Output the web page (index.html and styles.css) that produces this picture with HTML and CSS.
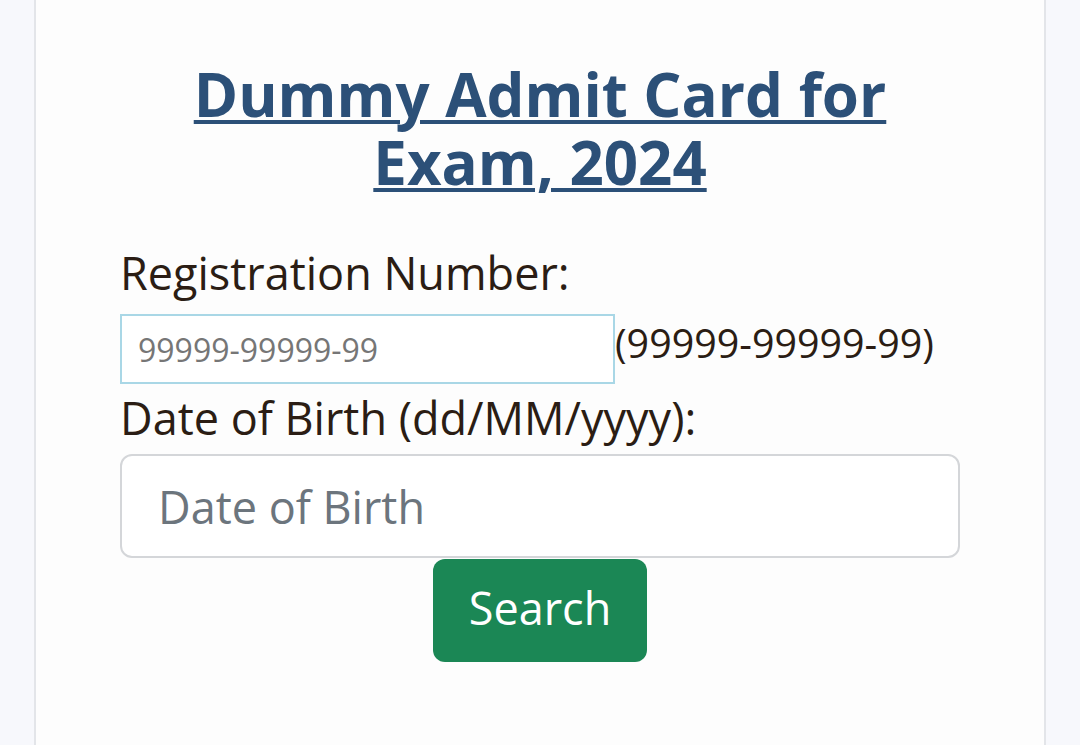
FILE: index.html
```html
<!DOCTYPE html>
<html lang="en">
<head>
<meta charset="utf-8">
<title>Dummy Admit Card</title>
<link rel="stylesheet" href="styles.css">
</head>
<body>
<div class="page">
  <div class="card">
    <h2 class="title"><a href="#">Dummy Admit Card for Exam, 2024</a></h2>
    <form class="form">
      <label class="label" for="reg">Registration Number:</label>
      <div class="reg-row">
        <input id="reg" class="reg-input" type="text" placeholder="99999-99999-99">
        <span class="hint">(99999-99999-99)</span>
      </div>
      <label class="label label-dob" for="dob">Date of Birth (dd/MM/yyyy):</label>
      <input id="dob" class="dob-input" type="text" placeholder="Date of Birth">
      <div class="actions">
        <button type="button" class="btn">Search</button>
      </div>
    </form>
  </div>
</div>
</body>
</html>
```

FILE: styles.css
```css
html, body {
  margin: 0;
  padding: 0;
  background: #f7f8fc;
  font-family: "Open Sans", "Liberation Sans", sans-serif;
}
.page {
  padding: 0 34px;
}
.card {
  background: #fdfdfd;
  border-left: 2px solid #e3e5e9;
  border-right: 2px solid #e3e5e9;
  min-height: 745px;
  box-sizing: border-box;
  padding: 60px 84px 0;
}
.title {
  margin: 0;
  text-align: center;
  font-family: "Open Sans", "Liberation Sans", sans-serif;
  font-weight: 700;
  font-size: 60px;
  line-height: 68px;
  padding: 0 60px;
}
.title a {
  color: #2c5078;
  text-decoration: underline;
  text-decoration-thickness: 4px;
  text-underline-offset: 3px;
}
.form {
  display: flex;
  flex-direction: column;
  margin-top: 47px;
}
.label {
  color: #2b1d14;
  font-size: 45px;
  line-height: 60px;
}
.reg-row {
  display: flex;
  align-items: flex-start;
  margin-top: 11px;
}
.reg-input {
  width: 495px;
  height: 70px;
  box-sizing: border-box;
  border: 2px solid #a9d7e6;
  padding: 0 16px;
  font-family: "Open Sans", sans-serif;
  font-size: 32px;
  color: #333;
  background: #fff;
  outline: none;
}
.reg-input::placeholder {
  color: #767676;
}
.hint {
  color: #2b1d14;
  font-size: 39.4px;
  line-height: 50px;
  margin-top: 4px;
}
.label-dob {
  margin-top: 4px;
}
.dob-input {
  margin-top: 6px;
  height: 104px;
  box-sizing: border-box;
  border: 2px solid #d4d6d9;
  border-radius: 12px;
  padding: 0 36px;
  font-family: "Open Sans", sans-serif;
  font-size: 45px;
  color: #212529;
  background: #fff;
  outline: none;
}
.dob-input::placeholder {
  color: #6c757d;
}
.actions {
  display: flex;
  justify-content: center;
  margin-top: 1px;
}
.btn {
  width: 214px;
  height: 103px;
  border: none;
  border-radius: 12px;
  background: #1b8755;
  color: #fff;
  font-family: "Open Sans", sans-serif;
  font-size: 45px;
  padding: 0 0 6px;
  cursor: pointer;
}
```
